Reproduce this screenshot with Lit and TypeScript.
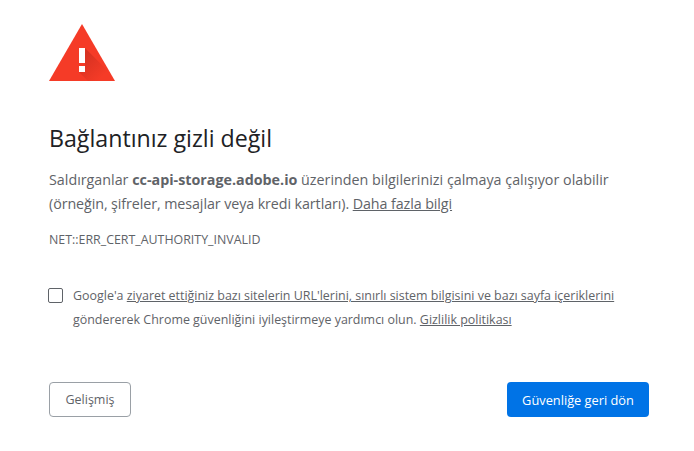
import { html, css, LitElement } from 'lit';
import { customElement } from 'lit/decorators.js';

@customElement('app-root')
export class AppRoot extends LitElement {
    static styles = css`
        :host {
            display: block;
            height: 451px;
            background: #fff;
            font-family: 'Open Sans', 'Noto Sans', sans-serif;
            color: #5f6368;
        }

        .page {
            display: flex;
            flex-direction: column;
            padding: 24px 45px 0 49px;
        }

        .icon {
            display: block;
            width: 66px;
            height: 57px;
        }

        h1 {
            margin: 41px 0 0;
            font-size: 23.2px;
            font-weight: 400;
            line-height: 32px;
            color: #202124;
        }

        .summary {
            margin: 14px 0 0;
            font-size: 14.3px;
            line-height: 24px;
            white-space: nowrap;
        }

        .tight {
            letter-spacing: -0.09px;
        }

        .summary a, .opt a {
            color: inherit;
            text-decoration: underline;
        }

        .code {
            margin-top: 16px;
            font-size: 12.4px;
            line-height: 16px;
            text-transform: uppercase;
        }

        .opt {
            display: flex;
            margin: 36px 0 0 -1px;
            gap: 10px;
        }

        .box {
            flex: none;
            width: 13px;
            height: 13px;
            margin-top: 4px;
            border: 1px solid #5f6368;
            border-radius: 2px;
        }

        .opt p {
            margin: 0;
            font-size: 12.44px;
            line-height: 24px;
            white-space: nowrap;
        }

        .actions {
            display: flex;
            justify-content: space-between;
            margin-top: 50px;
        }

        button {
            height: 35px;
            border-radius: 4px;
            font: inherit;
            cursor: pointer;
        }

        .advanced {
            width: 82px;
            background: #fff;
            border: 1px solid #9aa0a6;
            color: #5f6368;
            font-size: 12.5px;
        }

        .back {
            width: 142px;
            background: #0073e6;
            border: none;
            color: #fff;
            font-size: 12.8px;
        }
    `;

    render() {
        return html`
        <div class="page">
            <svg class="icon" viewBox="0 0 66 57">
                <defs>
                    <linearGradient id="shade" x1="36" y1="30" x2="56" y2="50" gradientUnits="userSpaceOnUse">
                        <stop offset="0" stop-color="#a82318" stop-opacity="0.4"></stop>
                        <stop offset="1" stop-color="#a82318" stop-opacity="0"></stop>
                    </linearGradient>
                </defs>
                <path d="M33 0 L66 57 L0 57 Z" fill="#f53b27"></path>
                <path d="M36 24 L61.9 49.9 L66 57 L39 57 L30 48 L36 48 Z" fill="url(#shade)"></path>
                <rect x="30" y="24" width="6" height="15" fill="#fff"></rect>
                <rect x="30" y="42" width="6" height="6" fill="#fff"></rect>
            </svg>
            <h1>Bağlantınız gizli değil</h1>
            <p class="summary">
                Saldırganlar <b>cc-api-storage.adobe.io</b> üzerinden bilgilerinizi çalmaya çalışıyor olabilir<br>
                <span class="tight">(örneğin, şifreler, mesajlar veya kredi kartları). <a href="#">Daha fazla bilgi</a></span>
            </p>
            <div class="code">net::err_cert_authority_invalid</div>
            <div class="opt">
                <div class="box"></div>
                <p>Google'a <a href="#">ziyaret ettiğiniz bazı sitelerin URL'lerini, sınırlı sistem bilgisini ve bazı sayfa içeriklerini</a><br>
                göndererek Chrome güvenliğini iyileştirmeye yardımcı olun. <a href="#">Gizlilik politikası</a></p>
            </div>
            <div class="actions">
                <button class="advanced">Gelişmiş</button>
                <button class="back">Güvenliğe geri dön</button>
            </div>
        </div>
        `;
    }
}
